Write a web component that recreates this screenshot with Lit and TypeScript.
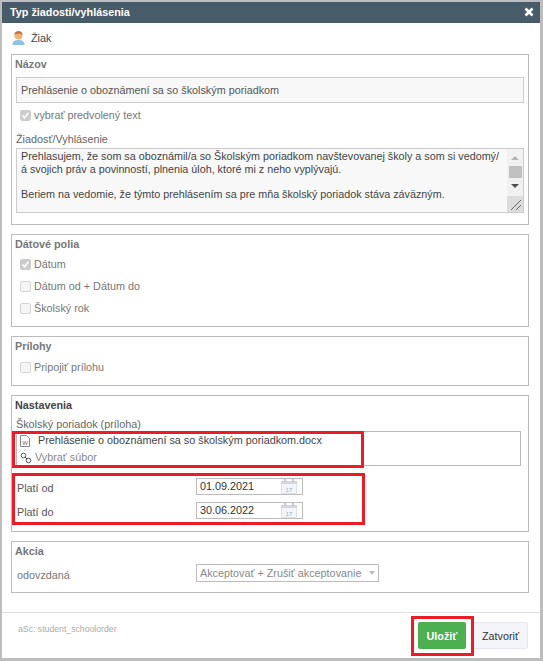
import { LitElement, html, css, svg } from "lit";
import { customElement } from "lit/decorators.js";

const checkbox = (checked: boolean) => html`<span class="cb ${checked ? "on" : ""}">${checked
  ? svg`<svg width="9" height="9" viewBox="0 0 9 9"><path d="M1.500 4.500l2 2.300L7.500 1.800" fill="none" stroke="#fff" stroke-width="1.500"/></svg>`
  : ""}</span>`;

const calendar = html`<svg class="cal" width="16" height="15" viewBox="0 0 16 15">
  <rect x="0.500" y="2.500" width="15" height="12" fill="#f3f4f9" stroke="#dfe1ea"/>
  <rect x="0" y="2" width="16" height="3" fill="#d3d6e2"/>
  <rect x="3" y="0" width="2" height="3" fill="#c3c6d4"/>
  <rect x="11" y="0" width="2" height="3" fill="#c3c6d4"/>
  <text x="8" y="12.500" font-size="6" font-family="Liberation Sans" text-anchor="middle" fill="#a8adbc">17</text>
</svg>`;

@customElement("app-root")
export class AppRoot extends LitElement {
  static styles = css`
    :host { display: block; position: relative; width: 543px; height: 661px; background: #bdbdbd; font-family: "Liberation Sans", Arial, sans-serif; font-size: 10.800px; color: #444; overflow: hidden; }
    .dialog { position: absolute; left: 2px; top: 2px; width: 538px; height: 656px; background: #fff; display: flex; flex-direction: column; }
    .head { height: 21px; box-sizing: border-box; flex: none; background: #475c68; color: #fff; font-weight: bold; font-size: 10.800px; display: flex; align-items: center; justify-content: space-between; padding: 0 6px 2px 8px; }
    .head svg { display: block; }
    .body { flex: 1; padding: 0 11px 0 9px; }
    .who { height: 31px; box-sizing: border-box; display: flex; align-items: center; gap: 6px; padding: 0 0 2px 1px; color: #444; }
    .panel { border: 1px solid #bcbcbc; box-sizing: border-box; padding: 0 3px; margin-bottom: 9px; position: relative; }
    .title { font-weight: bold; color: #777; line-height: 15px; padding-top: 2px; margin-bottom: 2px; }
    .title.dark { color: #444; }
    .p1 { height: 171px; }
    .p2 { height: 93px; }
    .p2 .title { margin-bottom: 1px; }
    .p3 { height: 50px; }
    .p4 { height: 137px; }
    .p5 { height: 52px; margin-bottom: 0; }
    .input { margin: 5px 0 0 1px; height: 26px; width: 508px; box-sizing: border-box; border: 1px solid #ccc; background: #f8f8f8; display: flex; align-items: center; padding-left: 4px; color: #555; }
    .cbrow { display: flex; align-items: center; gap: 3px; color: #777; padding-left: 5px; height: 22px; }
    .cb { width: 9px; height: 9px; border: 1px solid #d4d4d4; border-radius: 2px; background: #f5f5f5; display: inline-flex; flex: none; }
    .cb.on { background: #ccc; border-color: #ccc; }
    .cb svg { display: block; }
    .lab { color: #666; padding-left: 1px; line-height: 14px; }
    .ta { margin: 2px 0 0 1px; width: 508px; height: 65px; box-sizing: border-box; border: 1px solid #ccc; background: #f8f8f8; position: relative; overflow: hidden; padding: 1px 0 0 4px; font-size: 10.750px; line-height: 12.500px; color: #444; white-space: nowrap; }
    .ta .gap { margin-left: 180px; }
    .sb { position: absolute; right: 0; top: 0; bottom: 0; width: 16px; background: #f1f1f1; display: flex; flex-direction: column; align-items: center; }
    .thumb { width: 13px; height: 12px; background: #c1c1c1; margin-top: 6px; }
    .tri { width: 0; height: 0; border-left: 4px solid transparent; border-right: 4px solid transparent; }
    .tri.up { border-bottom: 4px solid #b5b5b5; margin-top: 7px; }
    .tri.dn { border-top: 4px solid #505050; margin-top: 6px; }
    .grip { position: absolute; right: 0; bottom: 0; width: 16px; height: 16px; background: #dcdcdc; }
    .grip svg { display: block; }
    .files { margin: 0 0 0 1px; width: 505px; height: 35px; box-sizing: border-box; border: 1px solid #bcbcbc; padding: 0 0 0 3px; line-height: 17px; }
    .file { display: flex; align-items: center; gap: 8px; color: #444; height: 17px; }
    .pick { display: flex; align-items: center; gap: 3px; color: #888; height: 17px; }
    .row { display: flex; align-items: center; padding-left: 2px; height: 24px; color: #555; }
    .row .k { width: 179px; flex: none; padding-top: 3px; }
    .date { width: 107px; height: 17px; box-sizing: border-box; border: 1px solid #bcbcbc; display: flex; align-items: center; justify-content: space-between; padding: 0 5px 0 3px; color: #333; }
    .sel { width: 183px; height: 18px; box-sizing: border-box; border: 1px solid #bcbcbc; display: flex; align-items: center; justify-content: space-between; padding: 0 3px 0 3px; color: #888; white-space: nowrap; }
    .sel i { width: 0; height: 0; border-left: 3.500px solid transparent; border-right: 3.500px solid transparent; border-top: 4px solid #bbb; }
    .foot { height: 46px; flex: none; border-top: 1px solid #dedede; display: flex; justify-content: space-between; padding: 0 12px 0 16px; box-sizing: border-box; }
    .src { font-size: 8.700px; color: #aaa; padding-top: 11px; }
    .btns { display: flex; gap: 7px; padding-top: 9px; align-items: flex-start; }
    .btn { height: 27px; box-sizing: border-box; display: flex; align-items: center; justify-content: center; border-radius: 2px; font-size: 10.800px; }
    .ok { width: 48px; background: #4caf50; color: #fff; font-weight: bold; }
    .no { width: 55px; background: #f4f5fa; border: 1px solid #e6e7ee; color: #333; }
    .red { position: absolute; border: 3px solid #ec1c24; box-sizing: border-box; pointer-events: none; }
  `;

  render() {
    return html`
      <div class="dialog">
        <div class="head">
          <span>Typ žiadosti/vyhlásenia</span>
          <svg width="10" height="10" viewBox="0 0 10 10"><path d="M1.500 1.500l7 7M8.500 1.500l-7 7" stroke="#fff" stroke-width="2.600"/></svg>
        </div>
        <div class="body">
          <div class="who">
            <svg width="13" height="15" viewBox="0 0 13 15">
              <path d="M0.500 15c0-4 2.500-5 6-5s6 1 6 5z" fill="#8ec3e6"/>
              <circle cx="6.500" cy="5.500" r="4" fill="#efb27c"/>
              <path d="M2.500 5c0-3 2-4 4-4s4 1 4 4c-1-1.500-6-2-8 0z" fill="#c9713e"/>
            </svg>
            <span>Žiak</span>
          </div>
          <div class="panel p1">
            <div class="title">Názov</div>
            <div class="input">Prehlásenie o oboznámení sa so školským poriadkom</div>
            <div class="cbrow" style="height:24px">${checkbox(true)}<span>vybrať predvolený text</span></div>
            <div class="lab" style="margin-top:5px">Žiadosť/Vyhlásenie</div>
            <div class="ta">
              <div>Prehlasujem, že som sa oboznámil/a so Školským poriadkom navštevovanej školy a som si vedomý/</div>
              <div>á svojich práv a povinností, plnenia úloh, ktoré mi z neho vyplývajú.</div>
              <div>&nbsp;</div>
              <div>Beriem na vedomie, že týmto prehlásením sa pre mňa školský poriadok stáva záväzným.</div>
              <div>&nbsp;</div>
              <div>Ž<span class="gap">ž</span></div>
              <div class="sb">
                <span class="tri up"></span>
                <span class="thumb"></span>
                <span class="tri dn"></span>
              </div>
              <div class="grip"><svg width="16" height="16" viewBox="0 0 16 16"><path d="M14 4L4 14M14 9l-5 5" stroke="#666" fill="none"/></svg></div>
            </div>
          </div>
          <div class="panel p2">
            <div class="title">Dátové polia</div>
            <div class="cbrow">${checkbox(true)}<span>Dátum</span></div>
            <div class="cbrow">${checkbox(false)}<span>Dátum od + Dátum do</span></div>
            <div class="cbrow">${checkbox(false)}<span>Školský rok</span></div>
          </div>
          <div class="panel p3">
            <div class="title">Prílohy</div>
            <div class="cbrow">${checkbox(false)}<span>Pripojiť prílohu</span></div>
          </div>
          <div class="panel p4">
            <div class="title dark">Nastavenia</div>
            <div class="lab" style="padding-top:2px">Školský poriadok (príloha)</div>
            <div class="files">
              <div class="file">
                <svg width="10" height="12" viewBox="0 0 10 12"><path d="M.5.5h6l3 3v8h-9z" fill="#fff" stroke="#888"/><text x="5" y="9.500" font-size="6" font-family="Liberation Sans" text-anchor="middle" fill="#666">W</text></svg>
                <span>Prehlásenie o oboznámení sa so školským poriadkom.docx</span>
              </div>
              <div class="pick">
                <svg width="12" height="12" viewBox="0 0 12 12"><circle cx="3.500" cy="3.500" r="2.300" fill="none" stroke="#555" stroke-width="1"/><circle cx="8.500" cy="8.500" r="2.300" fill="none" stroke="#555" stroke-width="1"/><path d="M5 5l2 2" stroke="#555"/></svg>
                <span>Vybrať súbor</span>
              </div>
            </div>
            <div class="row" style="margin-top:8px"><span class="k">Platí od</span><span class="date">01.09.2021 ${calendar}</span></div>
            <div class="row"><span class="k">Platí do</span><span class="date">30.06.2022 ${calendar}</span></div>
          </div>
          <div class="panel p5">
            <div class="title">Akcia</div>
            <div class="row" style="color:#777"><span class="k">odovzdaná</span><span class="sel">Akceptovať + Zrušiť akceptovanie <i></i></span></div>
          </div>
        </div>
        <div class="foot">
          <div class="src">aSc: student_schoolorder</div>
          <div class="btns">
            <div class="btn ok">Uložiť</div>
            <div class="btn no">Zatvoriť</div>
          </div>
        </div>
      </div>
      <div class="red" style="left:12px;top:431px;width:352px;height:37px"></div>
      <div class="red" style="left:12px;top:473px;width:353px;height:52px"></div>
      <div class="red" style="left:411px;top:616px;width:63px;height:40px"></div>
    `;
  }
}
